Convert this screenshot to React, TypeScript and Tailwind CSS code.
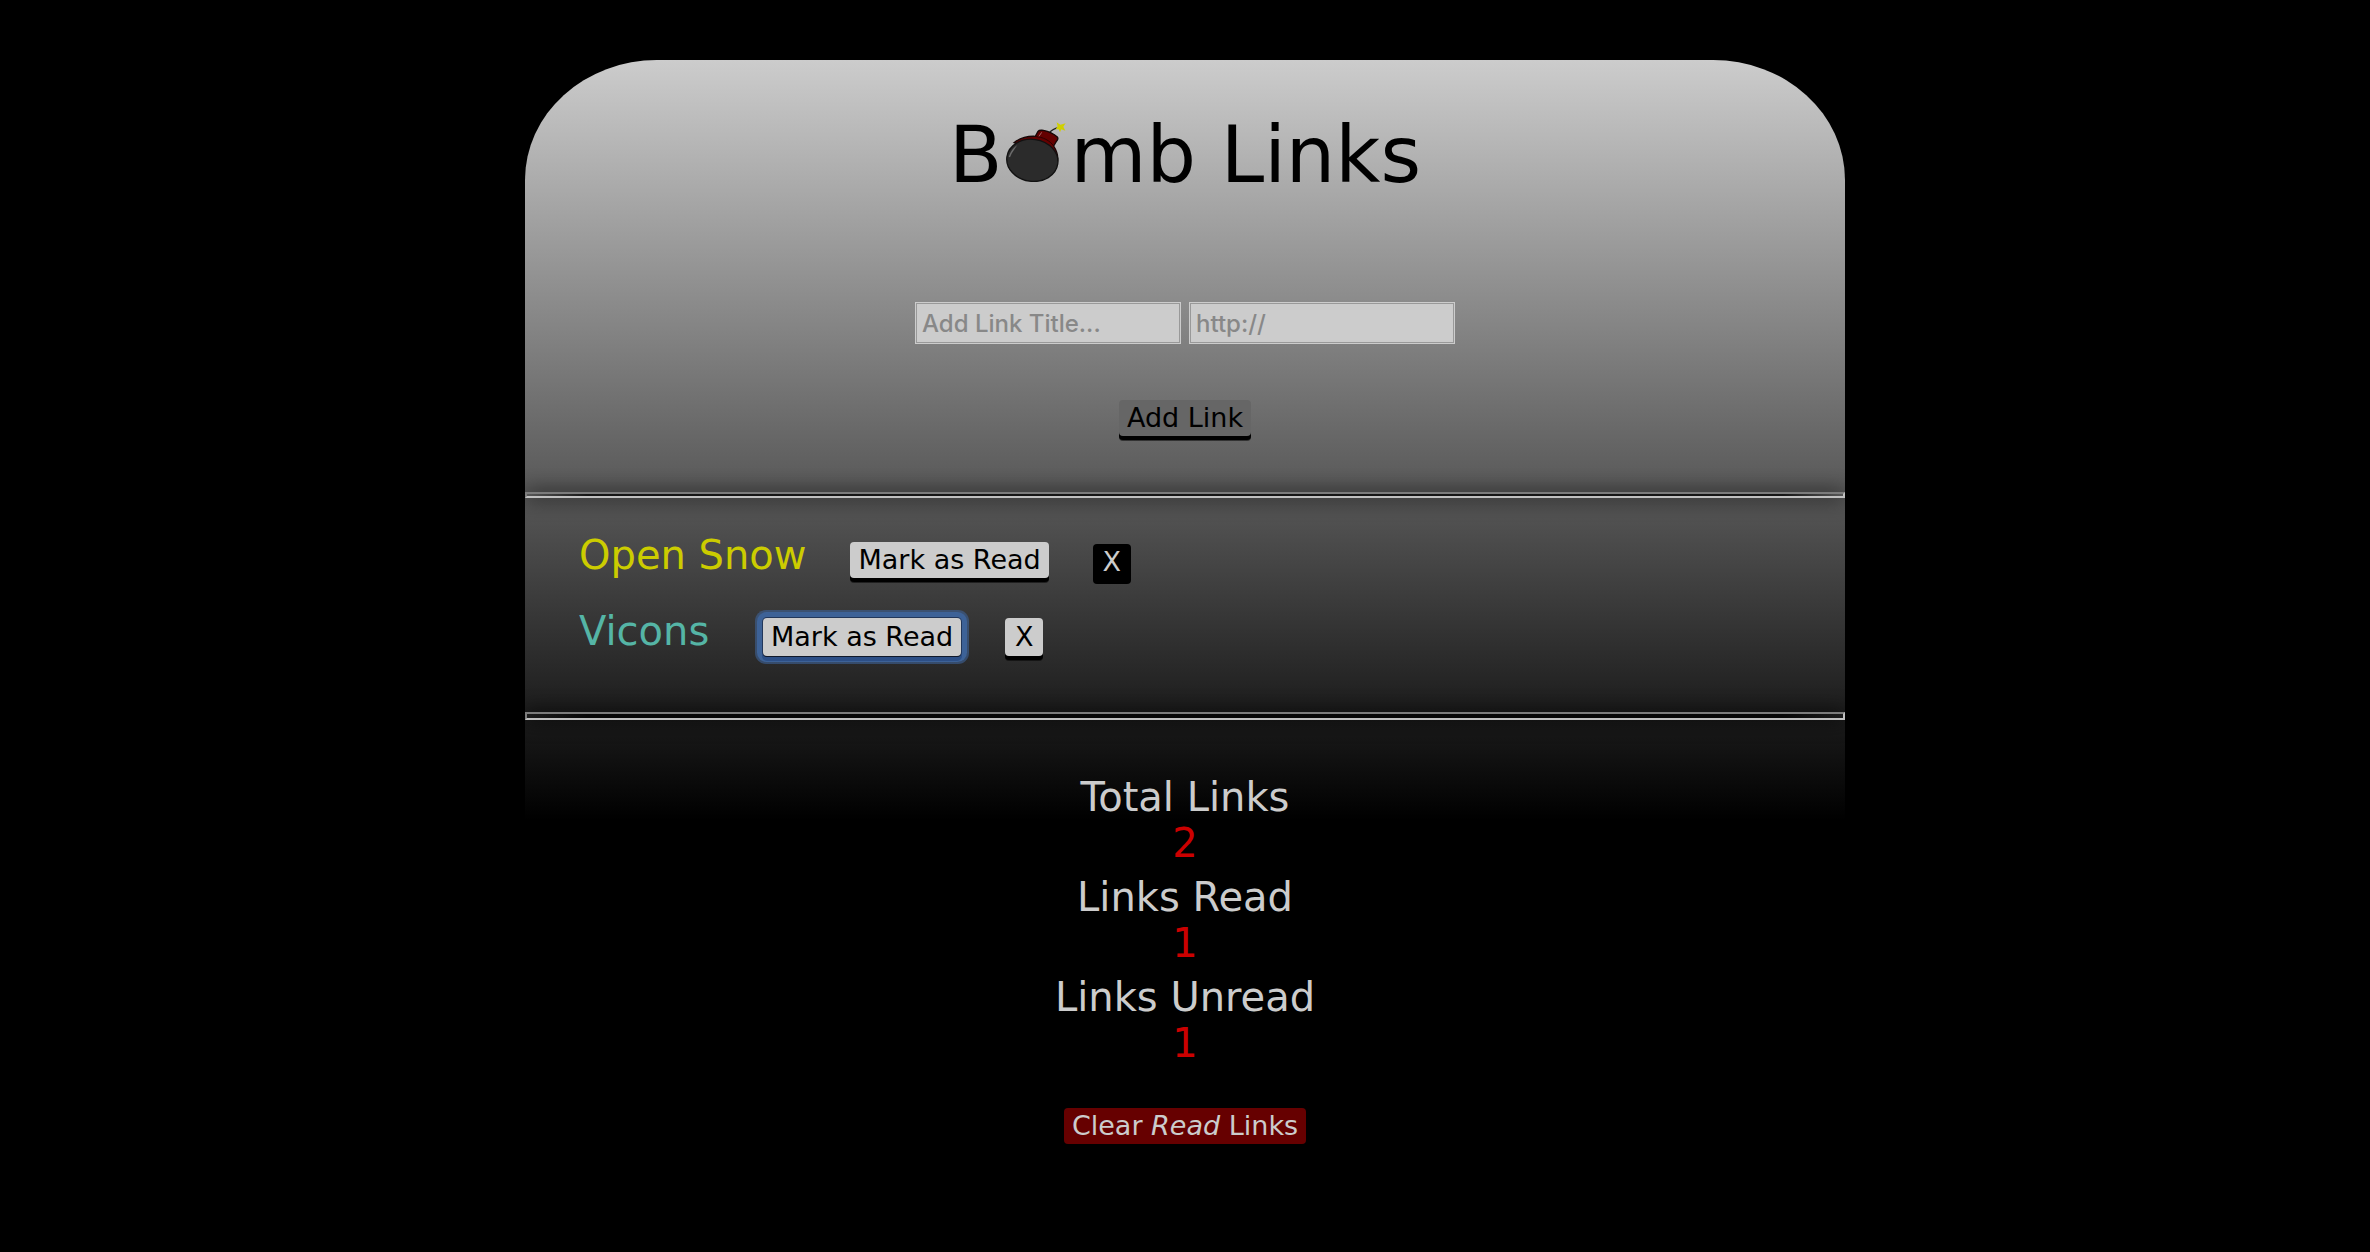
import type { ReactNode } from "react";

function Bomb() {
  return (
    <svg viewBox="54 36 180 180" className="size-[60px] shrink-0" role="img" aria-label="o">
      <path d="M184 70 C188 60 198 58 211 52" fill="none" stroke="#222" strokeWidth="4" />
      <path d="M206 37 L217 44 L233 40 L226 50 L232 62 L220 58 L216 67 L212 58 L203 58 L209 49 Z" fill="#d0d000" />
      <path
        d="M78 98 C96 84 120 78 142 79 L150 64 C154 59 160 61 166 61 C182 64 197 71 208 81 Q212 86 206 93 L197 108 C206 122 211 136 209 152 Z"
        fill="#640000"
        stroke="#160808"
        strokeWidth="4"
      />
      <path d="M142 80 C164 80 186 92 197 108" fill="none" stroke="#2a0000" strokeWidth="3" />
      <path d="M153 79 L161 67" stroke="#a06060" strokeWidth="3" />
      <ellipse cx="133" cy="151" rx="77" ry="63" fill="#2b2b2b" stroke="#111" strokeWidth="4" transform="rotate(8 133 151)" />
      <path d="M62 140 C68 124 76 113 88 105 C82 115 72 126 66 142 Z" fill="#6c6c6c" />
    </svg>
  );
}

const buttonBase = "rounded-[4px] px-2 text-[27px]";
const raised = "shadow-[0_4px_0_#000,0_5px_0_rgba(0,0,0,0.5)]";
const focused =
  "shadow-[0_1px_0_#10192b,0_0_0_1px_#22375a,0_4px_0_1px_#2c4f87,0_0_0_6px_#3d6297,0_0_0_8px_rgba(61,98,151,0.6)]";

function Divider({ size }: { size: string }) {
  return (
    <hr
      className={`${size} border-2 border-t-[#7c7c7c] border-l-[#7c7c7c] border-r-[#c0c0c0] border-b-[#c0c0c0] bg-[linear-gradient(90deg,transparent,rgba(0,0,0,0.75)_60px,rgba(0,0,0,0.75)_calc(100%-60px),transparent)] shadow-[0_0_20px_#000]`}
    />
  );
}

function LinkRow({ title, color, children }: { title: string; color: string; children: ReactNode }) {
  return (
    <li className="flex items-start gap-11">
      <a href="#" className={`${color} min-w-[140px] text-[40px] leading-[26px]`}>
        {title}
      </a>
      {children}
    </li>
  );
}

const stats = [
  { label: "Total Links", value: 2 },
  { label: "Links Read", value: 1 },
  { label: "Links Unread", value: 1 },
];

const inputClass =
  "h-[42px] w-[266px] border border-[#ccc] bg-[#ccc] px-1.5 font-['Inter',sans-serif] text-[24px] font-medium text-black shadow-[inset_0_0_0_1px_#999] placeholder:text-[#888] placeholder:opacity-100";

export default function App() {
  return (
    <div className="min-h-screen bg-black pt-[60px] font-['DejaVu_Sans',sans-serif]">
      <main className="mx-auto w-[90%] max-w-[1320px] overflow-hidden rounded-t-[132px_120px] bg-[linear-gradient(#ccc,#000_760px)] pb-16">
        <header className="flex flex-col items-center pt-14 pb-14">
          <h1 className="flex items-end text-[78px] leading-[78px] text-black">
            <span>B</span>
            <span className="pr-1 pb-3 pl-1">
              <Bomb />
            </span>
            <span>mb Links</span>
          </h1>
          <form className="mt-[108px] flex flex-col items-center gap-14" onSubmit={(e) => e.preventDefault()}>
            <div className="flex flex-wrap justify-center gap-2">
              <input type="text" aria-label="Link title" placeholder="Add Link Title..." className={inputClass} />
              <input type="text" aria-label="Link address" placeholder="http://" className={inputClass} />
            </div>
            <button type="submit" className={`${buttonBase} ${raised} bg-[#666] leading-[36px] text-black`}>
              Add Link
            </button>
          </form>
        </header>

        <Divider size="h-1.5" />

        <ul className="flex flex-col gap-10 px-[54px] pt-11 pb-14">
          <LinkRow title="Open Snow" color="text-[#cccc00]">
            <button className={`${buttonBase} ${raised} bg-[#ccc] leading-[36px] text-black`}>Mark as Read</button>
            <button
              aria-label="Delete Open Snow"
              className={`${buttonBase} mt-0.5 -mb-1.5 min-w-[38px] bg-black pb-1 leading-[36px] text-[#ccc]`}
            >
              X
            </button>
          </LinkRow>
          <LinkRow title="Vicons" color="text-[#55b5a6]">
            <button className={`${buttonBase} ${focused} bg-[#ccc] leading-[38px] text-black`}>Mark as Read</button>
            <button
              aria-label="Delete Vicons"
              className={`${buttonBase} ${raised} min-w-[38px] bg-[#ccc] leading-[38px] text-black`}
            >
              X
            </button>
          </LinkRow>
        </ul>

        <Divider size="h-2" />

        <section className="flex flex-col items-center pt-[54px]">
          <dl className="flex flex-col gap-2 text-center text-[40px] leading-[46px]">
            {stats.map(({ label, value }) => (
              <div key={label}>
                <dt className="text-[#ccc]">{label}</dt>
                <dd className="text-[#c00]">{value}</dd>
              </div>
            ))}
          </dl>
          <button className={`${buttonBase} mt-[42px] bg-[#600] leading-[36px] text-[#ccc]`}>
            Clear <em>Read</em> Links
          </button>
        </section>
      </main>
    </div>
  );
}
